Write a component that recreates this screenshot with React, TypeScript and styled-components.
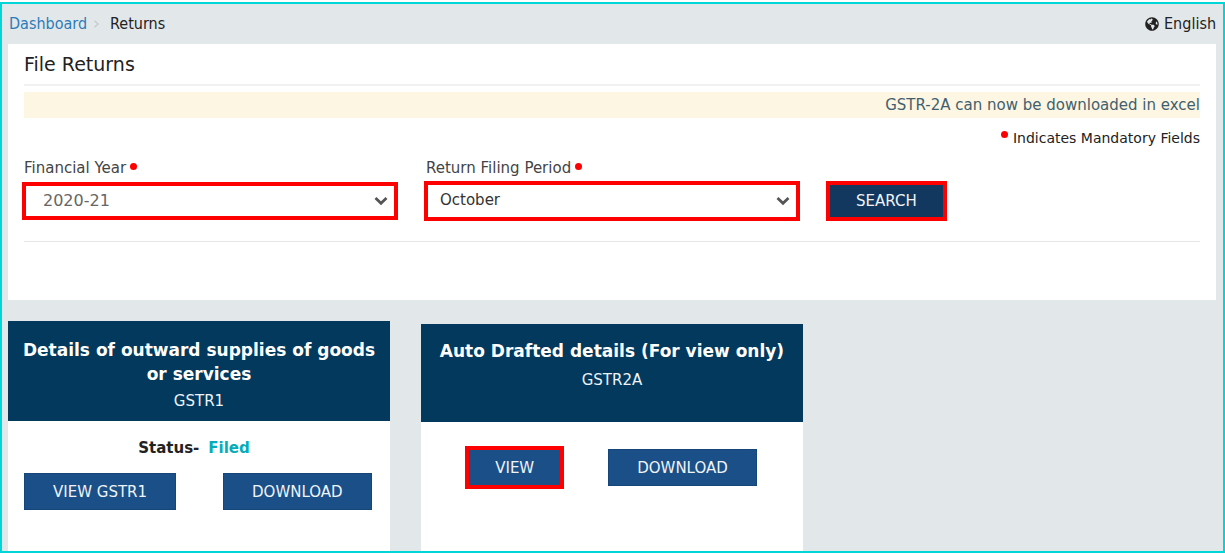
import React from "react";
import styled, { createGlobalStyle } from "styled-components";
import { FaGlobeAmericas } from "react-icons/fa";

const GlobalStyle = createGlobalStyle`
  *, *::before, *::after { box-sizing: border-box; }
  body {
    margin: 0;
    background: #ffffff;
    color: #222222;
    font: 15px/24px "DejaVu Sans", Verdana, Tahoma, sans-serif;
  }
`;

const Page = styled.div`
  display: flex;
  flex-direction: column;
  min-height: 100vh;
  padding: 2px 0 1px;
`;

const Frame = styled.div`
  display: flex;
  flex-direction: column;
  flex: 1;
  padding: 0 7px 0 6px;
  border: 2px solid #00d5d8;
  background: #e2e7ea;
`;

const TopBar = styled.header`
  display: flex;
  align-items: center;
  justify-content: space-between;
  height: 40px;
  font: 16px/24px "DejaVu Sans Condensed", "DejaVu Sans", Tahoma, sans-serif;
`;

const Breadcrumb = styled.nav`
  display: flex;
  align-items: center;
  padding-left: 1px;
`;

const CrumbLink = styled.a`
  color: #2c7cb8;
  text-decoration: none;
`;

const CrumbArrow = styled.svg`
  width: 5px;
  height: 8px;
  margin: 0 11px 0 7px;
`;

const LanguageButton = styled.button`
  display: flex;
  align-items: center;
  gap: 5px;
  padding: 0;
  border: 0;
  background: none;
  color: #222222;
  font: inherit;
`;

const Panel = styled.main`
  padding: 8px 16px 58px;
  background: #ffffff;
`;

const PanelTitle = styled.h1`
  margin: 0;
  padding-bottom: 7px;
  border-bottom: 2px solid #f1f1f1;
  font-size: 19px;
  font-weight: 400;
  line-height: 25px;
`;

const Notice = styled.p`
  overflow: hidden;
  margin: 6px 0 0;
  background: #fdf6e2;
  color: #41606f;
  line-height: 26px;
  text-align: right;
  white-space: nowrap;
`;

const MandatoryNote = styled.p`
  display: flex;
  align-items: center;
  justify-content: flex-end;
  gap: 5px;
  margin: 8px 0 0;
  font-size: 14px;
`;

const Dot = styled.span<{ $raised?: boolean }>`
  display: inline-block;
  width: 7px;
  height: 7px;
  border-radius: 50%;
  background: #ff0000;
  margin-bottom: ${(p) => (p.$raised ? "8px" : "4px")};
`;

const SearchForm = styled.form`
  display: grid;
  grid-template-columns: repeat(3, 1fr);
  align-items: end;
  column-gap: 30px;
  margin-top: 6px;
  padding-bottom: 22px;
  border-bottom: 1px solid #e6e6e6;
`;

const Field = styled.div`
  display: flex;
  flex-direction: column;
`;

const Label = styled.label`
  display: flex;
  align-items: center;
  gap: 4px;
  height: 27px;
  padding-bottom: 3px;
  color: #444444;
`;

const SelectBox = styled.div`
  position: relative;
  display: flex;
  align-items: center;
  height: 36px;
`;

const Select = styled.select<{ $muted?: boolean }>`
  appearance: none;
  width: 100%;
  height: ${(p) => (p.$muted ? "34px" : "36px")};
  padding: ${(p) => (p.$muted ? "0 32px 0 19px" : "0 32px 2px 14px")};
  border: 0;
  border-radius: 0;
  outline: 4px solid #ff0000;
  outline-offset: -2px;
  background: #ffffff;
  color: ${(p) => (p.$muted ? "#666666" : "#333333")};
  font: inherit;
  font-size: ${(p) => (p.$muted ? "16px" : "15px")};
`;

const Chevron = styled.svg`
  position: absolute;
  right: 8px;
  top: 13px;
  width: 14px;
  height: 10px;
  pointer-events: none;
`;

const Button = styled.button<{ $kind?: "search" | "highlight" }>`
  height: ${(p) => (p.$kind === "search" ? "36px" : p.$kind === "highlight" ? "39px" : "37px")};
  padding: 0 ${(p) => (p.$kind ? "27px" : "28px")};
  border: 1px solid ${(p) => (p.$kind === "search" ? "#0b1f33" : "#164579")};
  outline: ${(p) => (p.$kind ? "4px solid #ff0000" : "none")};
  outline-offset: -2px;
  background: ${(p) => (p.$kind === "search" ? "#12385f" : "#1a4f87")};
  color: #f0f4f8;
  font: inherit;
  white-space: nowrap;
`;

const SearchButton = styled(Button)`
  justify-self: start;
`;

const Cards = styled.section`
  display: grid;
  grid-template-columns: repeat(3, 1fr);
  flex: 1;
  column-gap: 31px;
  margin-top: 21px;
`;

const Card = styled.article<{ $lowered?: boolean }>`
  margin-top: ${(p) => (p.$lowered ? "3px" : "0")};
  background: #ffffff;
`;

const CardHead = styled.header<{ $short?: boolean }>`
  height: ${(p) => (p.$short ? "98px" : "100px")};
  padding: ${(p) => (p.$short ? "15px" : "17px")} 8px 0;
  background: #02395d;
  color: #ffffff;
  text-align: center;
`;

const CardTitle = styled.h2`
  margin: 0;
  font-size: 17px;
  font-weight: 700;
  line-height: 24px;
`;

const CardCode = styled.p<{ $spaced?: boolean }>`
  margin: ${(p) => (p.$spaced ? "5px" : "3px")} 0 0;
  color: #eef3f7;
`;

const Status = styled.p`
  display: flex;
  justify-content: center;
  gap: 9px;
  margin: 15px 10px 13px 0;
  font-weight: 700;
`;

const Filed = styled.strong`
  color: #04adb9;
`;

const Actions = styled.div<{ $centered?: boolean }>`
  display: flex;
  align-items: center;
  justify-content: ${(p) => (p.$centered ? "center" : "flex-start")};
  gap: ${(p) => (p.$centered ? "46px" : "47px")};
  padding: ${(p) => (p.$centered ? "26px 0" : "0 16px")};
`;

function Caret() {
  return (
    <Chevron viewBox="0 0 14 10" aria-hidden="true">
      <path d="M1.5 2 7 7.3 12.5 2" fill="none" stroke="#555555" strokeWidth="2.8" />
    </Chevron>
  );
}

export default function App() {
  return (
    <Page>
      <GlobalStyle />
      <Frame>
        <TopBar>
          <Breadcrumb aria-label="Breadcrumb">
            <CrumbLink href="#dashboard">Dashboard</CrumbLink>
            <CrumbArrow viewBox="0 0 5 8" aria-hidden="true">
              <path d="M.5.8 4.2 4 .5 7.2" fill="none" stroke="#c3c8cb" strokeWidth="1.2" />
            </CrumbArrow>
            <span>Returns</span>
          </Breadcrumb>
          <LanguageButton type="button">
            <FaGlobeAmericas size={14} aria-hidden="true" />
            English
          </LanguageButton>
        </TopBar>

        <Panel>
          <PanelTitle>File Returns</PanelTitle>
          <Notice>GSTR-2A can now be downloaded in excel</Notice>
          <MandatoryNote>
            <Dot $raised />
            Indicates Mandatory Fields
          </MandatoryNote>
          <SearchForm onSubmit={(e) => e.preventDefault()}>
            <Field>
              <Label htmlFor="year">
                Financial Year
                <Dot />
              </Label>
              <SelectBox>
                <Select id="year" $muted defaultValue="2020-21">
                  <option>2020-21</option>
                </Select>
                <Caret />
              </SelectBox>
            </Field>
            <Field>
              <Label htmlFor="period">
                Return Filing Period
                <Dot />
              </Label>
              <SelectBox>
                <Select id="period" defaultValue="October">
                  <option>October</option>
                </Select>
                <Caret />
              </SelectBox>
            </Field>
            <SearchButton type="submit" $kind="search">
              SEARCH
            </SearchButton>
          </SearchForm>
        </Panel>

        <Cards>
          <Card>
            <CardHead>
              <CardTitle>Details of outward supplies of goods or services</CardTitle>
              <CardCode>GSTR1</CardCode>
            </CardHead>
            <Status>
              Status- <Filed>Filed</Filed>
            </Status>
            <Actions>
              <Button type="button">VIEW GSTR1</Button>
              <Button type="button">DOWNLOAD</Button>
            </Actions>
          </Card>
          <Card $lowered>
            <CardHead $short>
              <CardTitle>Auto Drafted details (For view only)</CardTitle>
              <CardCode $spaced>GSTR2A</CardCode>
            </CardHead>
            <Actions $centered>
              <Button type="button" $kind="highlight">
                VIEW
              </Button>
              <Button type="button">DOWNLOAD</Button>
            </Actions>
          </Card>
        </Cards>
      </Frame>
    </Page>
  );
}
